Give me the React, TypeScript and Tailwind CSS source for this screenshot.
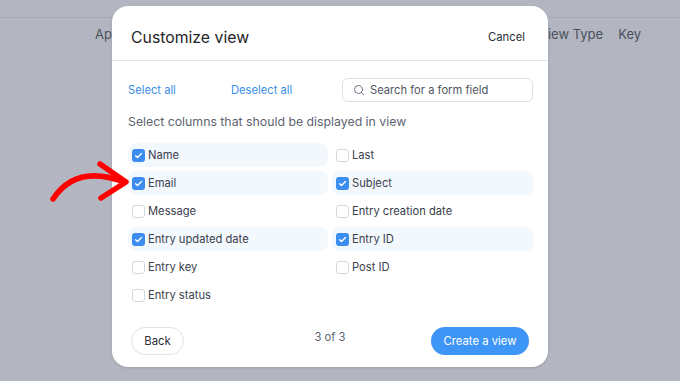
import React from "react";
import { Search } from "lucide-react";

const left: [string, boolean][] = [
  ["Name", true],
  ["Email", true],
  ["Message", false],
  ["Entry updated date", true],
  ["Entry key", false],
  ["Entry status", false],
];
const right: [string, boolean][] = [
  ["Last", false],
  ["Subject", true],
  ["Entry creation date", false],
  ["Entry ID", true],
  ["Post ID", false],
];

function Box({ on }: { on: boolean }) {
  return on ? (
    <span className="flex h-[13px] w-[13px] shrink-0 items-center justify-center rounded-[3px] bg-[#3b8ef0]">
      <svg width="9" height="9" viewBox="0 0 10 10" fill="none">
        <path d="M1.8 5.2 L4 7.3 L8.3 2.8" stroke="white" strokeWidth="1.5" strokeLinecap="round" strokeLinejoin="round" />
      </svg>
    </span>
  ) : (
    <span className="h-[13px] w-[13px] shrink-0 rounded-[3px] border border-[#d3d6dc] bg-white" />
  );
}

function Row({ label, on }: { label: string; on: boolean }) {
  return (
    <div
      className={
        "flex h-6 items-center gap-[3px] rounded-lg pl-1 text-[11.2px] text-[#3a404d] " +
        (on ? "bg-[#f3f8fd]" : "")
      }
    >
      <Box on={on} />
      <span>{label}</span>
    </div>
  );
}

export default function App() {
  return (
    <div
      className="relative h-[381px] w-[680px] overflow-hidden bg-[#b3b6c0]"
      style={{ fontFamily: "Inter, 'Noto Sans', sans-serif" }}
    >
      <div className="h-[18px] border-b border-[#a5a8b2]" />
      <div className="flex h-[30px] items-center pt-[4px] text-[13px] text-[#4a505c]">
        <span className="ml-[95px]">Ap</span>
        <span className="ml-[436px]">iew Type</span>
        <span className="ml-[15px]">Key</span>
      </div>

      <div className="absolute left-[112px] top-[6px] flex h-[361px] w-[436px] flex-col rounded-2xl bg-white shadow-sm">
        <div className="flex h-[55px] shrink-0 items-center justify-between border-b border-[#e3e5e9] pl-[19px] pr-[23px] pt-[9px]">
          <span className="text-[15.8px] text-[#1f2329]">Customize view</span>
          <span className="text-[11.3px] text-[#2a2f38]">Cancel</span>
        </div>
        <div className="flex flex-col px-4 pt-[17px]">
          <div className="flex h-6 items-center text-[11.2px] text-[#3a8ee6]">
            <span className="w-[103px]">Select all</span>
            <span>Deselect all</span>
            <div className="ml-auto mr-[-1px] flex h-6 w-[191px] items-center gap-[5px] rounded-md border border-[#dcdfe4] pl-[10px] text-[11.2px] text-[#4f5562]">
              <Search size={12} strokeWidth={2} className="text-[#6b7180]" />
              <span>Search for a form field</span>
            </div>
          </div>
          <div className="mt-[12px] text-[12.3px] leading-4 text-[#5d6470]">
            Select columns that should be displayed in view
          </div>
          <div className="mt-[13px] grid grid-cols-2 gap-x-1">
            <div className="flex flex-col gap-1">
              {left.map(([l, o]) => (
                <Row key={l} label={l} on={o} />
              ))}
            </div>
            <div className="mr-[-1px] flex flex-col gap-1">
              {right.map(([l, o]) => (
                <Row key={l} label={l} on={o} />
              ))}
            </div>
          </div>
        </div>
        <div className="mt-[20px] flex items-center justify-between pl-[19px] pr-[19px]">
          <button className="h-7 w-[53px] rounded-full border border-[#dfe2e6] text-[11.3px] text-[#2a2f38]">
            Back
          </button>
          <span className="mb-[8px] ml-[45px] text-[11.2px] text-[#5d6470]">3 of 3</span>
          <button className="h-7 w-[98px] rounded-full bg-[#3d95f5] text-[11.3px] text-white">
            Create a view
          </button>
        </div>
      </div>

      <svg className="absolute left-0 top-0" width="680" height="381" fill="none">
        <path d="M53 199 Q 76 164 124 182" stroke="#ff0000" strokeWidth="5.5" strokeLinecap="round" />
        <path d="M100 164 L126 182 L101 198" stroke="#ff0000" strokeWidth="5.5" strokeLinecap="round" strokeLinejoin="round" />
      </svg>
    </div>
  );
}
